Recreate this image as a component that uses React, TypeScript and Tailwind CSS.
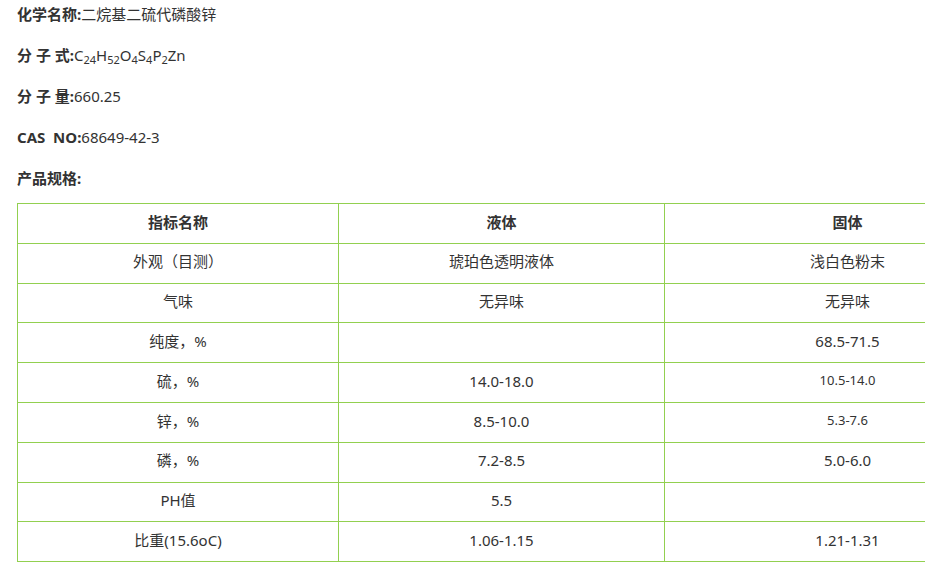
import React from 'react';

const rows: [string, string, string, boolean?][] = [
    ['外观（目测）', '琥珀色透明液体', '浅白色粉末'],
    ['气味', '无异味', '无异味'],
    ['纯度，%', '', '68.5-71.5'],
    ['硫，%', '14.0-18.0', '10.5-14.0', true],
    ['锌，%', '8.5-10.0', '5.3-7.6', true],
    ['磷，%', '7.2-8.5', '5.0-6.0'],
    ['PH值', '5.5', ''],
    ['比重(15.6oC)', '1.06-1.15', '1.21-1.31'],
];

const Sub = ({ children }: { children: React.ReactNode }) => (
    <sub className="text-[11px] relative top-[3px] align-baseline">{children}</sub>
);

const cell = 'border border-[#92d050] text-center pb-[3px]';

const App = () => {
    return (
        <div
            className="w-[925px] h-[569px] overflow-hidden bg-white text-[15px] text-[#333]"
            style={{ fontFamily: '"Noto Sans", "Noto Sans CJK SC", sans-serif' }}
        >
            <div className="pl-[17px] pt-[4px]">
                <p className="leading-[21px] mb-[20px]">
                    <b>化学名称:</b>二烷基二硫代磷酸锌
                </p>
                <p className="leading-[21px] mb-[20px]">
                    <b>分 子 式:</b>C<Sub>24</Sub>H<Sub>52</Sub>O<Sub>4</Sub>S<Sub>4</Sub>P<Sub>2</Sub>Zn
                </p>
                <p className="leading-[21px] mb-[20px]">
                    <b>分 子 量:</b>660.25
                </p>
                <p className="leading-[21px] mb-[20px]">
                    <b>CAS&nbsp;&nbsp;NO:</b>68649-42-3
                </p>
                <p className="leading-[21px] mb-[14px]">
                    <b>产品规格:</b>
                </p>

                <table className="border-collapse w-[1013px] table-fixed">
                    <colgroup>
                        <col className="w-[321px]" />
                        <col className="w-[326px]" />
                        <col className="w-[366px]" />
                    </colgroup>
                    <tbody>
                        <tr className="h-[39.8px]">
                            <td className={`${cell} font-bold`}>指标名称</td>
                            <td className={`${cell} font-bold`}>液体</td>
                            <td className={`${cell} font-bold`}>固体</td>
                        </tr>
                        {rows.map(([a, b, c, small]) => (
                            <tr key={a} className="h-[39.8px]">
                                <td className={cell}>{a}</td>
                                <td className={cell}>{b}</td>
                                <td className={`${cell} ${small ? 'text-[13px]' : ''}`}>{c}</td>
                            </tr>
                        ))}
                    </tbody>
                </table>
            </div>
        </div>
    );
};

export default App;
